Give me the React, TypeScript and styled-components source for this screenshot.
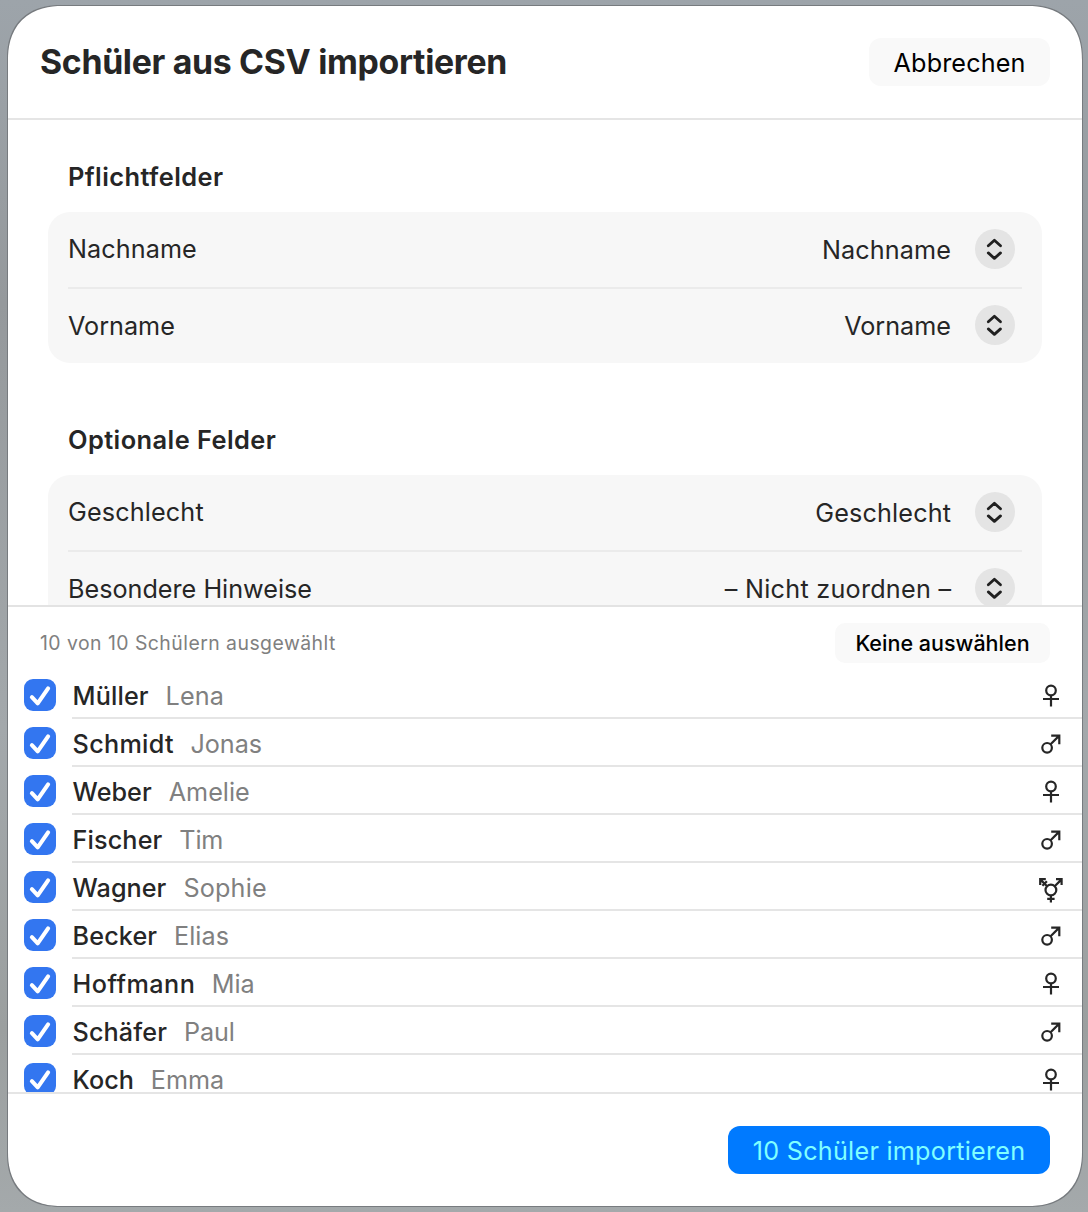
import React, { useState } from 'react';
import styled, { createGlobalStyle, css } from 'styled-components';

const GlobalStyle = createGlobalStyle`
  * { box-sizing: border-box; }
  body { margin: 0; }
`;

const Backdrop = styled.div`
  width: 1088px;
  height: 1212px;
  padding: 6px 6px 6px 8px;
  overflow: hidden;
  background: linear-gradient(180deg, #9da4aa 0%, #95999c 25%, #a3a8ab 60%, #9b9f9f 85%, #a4a9ab 100%);
  font-family: Inter, 'Liberation Sans', sans-serif;
  font-size: 25.2px;
  font-weight: 425;
  color: #262626;
`;

const Sheet = styled.main`
  display: flex;
  flex-direction: column;
  height: 1200px;
  overflow: hidden;
  background: #fff;
  border-radius: 54px;
  corner-shape: superellipse(1.2);
  box-shadow: 0 0 0 1px #777b7f;
`;

const Label = styled.span<{ $track?: number; $drop?: number }>`
  padding-top: ${(p) => (p.$drop ?? 0) * 2}px;
  letter-spacing: ${(p) => p.$track ?? 0}px;
  margin-right: ${(p) => -(p.$track ?? 0)}px;
  white-space: nowrap;
`;

const Header = styled.header`
  display: flex;
  align-items: center;
  justify-content: space-between;
  flex: none;
  height: 114px;
  padding: 0 32px;
  border-bottom: 2px solid #e5e5e5;
`;

const Title = styled.h1`
  margin: 0;
  font-size: 33.8px;
  font-weight: 700;
  line-height: 40px;
  letter-spacing: -0.31px;
`;

const Button = styled.button<{ $kind?: 'small' | 'primary'; $width: number }>`
  display: flex;
  align-items: center;
  justify-content: center;
  width: ${(p) => p.$width}px;
  height: 48px;
  padding: 0;
  border: 0;
  border-radius: 12px;
  background: #f9f9f9;
  color: #000;
  font: inherit;
  ${(p) =>
    p.$kind === 'small' &&
    css`
      height: 40px;
      border-radius: 10px;
      font-size: 21.5px;
      font-weight: 500;
    `}
  ${(p) =>
    p.$kind === 'primary' &&
    css`
      background: #007aff;
      color: #80ffff;
    `}
`;

const Form = styled.section`
  flex: none;
  height: 487px;
  padding: 0 40px;
  overflow: hidden;
  border-bottom: 2px solid #e3e3e3;
`;

const GroupTitle = styled.h2<{ $gap: number }>`
  margin: 0;
  padding: ${(p) => p.$gap}px 20px 20px;
  font-size: 25.4px;
  font-weight: 620;
  line-height: 30px;
  letter-spacing: 0.43px;
`;

const Group = styled.div`
  padding: 0 20px;
  background: #f7f7f7;
  border-radius: 22px;
`;

const Field = styled.div`
  display: flex;
  align-items: center;
  justify-content: space-between;
  height: 74px;
  padding: 0 7px 2px 0;

  &:first-child {
    height: 77px;
    padding: 0 7px 1px 0;
    border-bottom: 2px solid #ebebeb;
  }
`;

const Picker = styled.div`
  display: flex;
  align-items: center;
  gap: 24px;
`;

const Stepper = styled.button`
  display: flex;
  align-items: center;
  justify-content: center;
  width: 40px;
  height: 40px;
  padding: 0;
  border: 0;
  border-radius: 50%;
  background: #e4e4e4;
  color: #202020;
`;

const Toolbar = styled.div`
  display: flex;
  align-items: center;
  justify-content: space-between;
  flex: none;
  height: 64px;
  padding: 8px 32px 0;
`;

const Count = styled.div`
  color: #808080;
  font-size: 19.4px;
`;

const List = styled.ul`
  flex: none;
  height: 423px;
  margin: 0;
  padding: 0 0 0 16px;
  overflow: hidden;
  list-style: none;
  border-bottom: 2px solid #e5e5e5;
`;

const Student = styled.li`
  display: flex;
  align-items: stretch;
  gap: 16px;
  height: 48px;
`;

const CheckCell = styled.button`
  display: flex;
  align-items: center;
  padding: 0;
  border: 0;
  background: none;
`;

const StudentBody = styled.div`
  display: flex;
  align-items: center;
  flex: 1;
  padding: 3px 18px 0 0.6px;
  border-bottom: 2px solid #e5e5e5;
`;

const LastName = styled(Label)`
  font-weight: 540;
`;

const FirstName = styled(Label)`
  flex: 1;
  padding-left: 17px;
  color: #808080;
`;

const Footer = styled.footer`
  display: flex;
  align-items: center;
  justify-content: flex-end;
  flex: 1;
  padding: 0 32px;
`;

const Chevrons = () => (
  <svg width="40" height="40" viewBox="0 0 40 40" fill="none" stroke="currentColor" strokeWidth="2.8" strokeLinecap="round" strokeLinejoin="round">
    <path d="M13.3 16.8 19.4 11.3 25.5 16.8M13.3 23.9 19.4 29.4 25.5 23.9" />
  </svg>
);

const Checkbox = ({ checked }: { checked: boolean }) => (
  <svg width="32" height="32" viewBox="0 0 32 32" fill="none">
    <rect width="32" height="32" rx="9" fill={checked ? '#3376f0' : '#e4e4e4'} />
    {checked && <path d="M7.9 18.2 13.7 24.3 24.1 9.4" stroke="#fff" strokeWidth="4.1" strokeLinecap="round" strokeLinejoin="round" />}
  </svg>
);

type Gender = 'female' | 'male' | 'diverse';

const shapes: Record<Gender, React.ReactNode> = {
  female: (
    <>
      <circle cx="13" cy="10.5" r="4.8" />
      <path d="M13 15.3V26.4M5 19H21" />
    </>
  ),
  male: (
    <>
      <circle cx="9.1" cy="19.8" r="4.8" />
      <path d="M12.6 16.3 21 7.9M13.2 7.6H21.3V16.2" />
    </>
  ),
  diverse: (
    <>
      <circle cx="12.9" cy="18" r="5.4" />
      <path d="M12.9 23.4V30.6M9.2 26.8H16.6M16.7 14.2 23.3 7.6M18 7.2H23.6V13M9.1 14.2 2.5 7.6M7.8 7.2H2.2V13M4.4 13.8 8.9 9.3" />
    </>
  ),
};

const GenderIcon = ({ gender }: { gender: Gender }) => (
  <svg width="26" height="32" viewBox="0 0 26 32" fill="none" stroke="#262626" strokeWidth="2.2">
    {shapes[gender]}
  </svg>
);

interface FieldData {
  label: string;
  value: string;
  track: number;
  valueTrack: number;
  drop: number;
}

const required: FieldData[] = [
  { label: 'Nachname', value: 'Nachname', track: 0.08, valueTrack: 0.12, drop: 0 },
  { label: 'Vorname', value: 'Vorname', track: 0, valueTrack: 0, drop: 1 },
];

const optional: FieldData[] = [
  { label: 'Geschlecht', value: 'Geschlecht', track: 0.14, valueTrack: 0.16, drop: 0 },
  { label: 'Besondere Hinweise', value: '– Nicht zuordnen –', track: 0, valueTrack: 0.25, drop: 1 },
];

const students: [string, string, Gender, number, number][] = [
  ['Müller', 'Lena', 'female', 0.12, 0.1],
  ['Schmidt', 'Jonas', 'male', 0.3, -0.1],
  ['Weber', 'Amelie', 'female', 0.05, 0],
  ['Fischer', 'Tim', 'male', 0.12, -0.15],
  ['Wagner', 'Sophie', 'diverse', 0.05, 0.18],
  ['Becker', 'Elias', 'male', 0.1, 0.05],
  ['Hoffmann', 'Mia', 'female', 0.45, -0.1],
  ['Schäfer', 'Paul', 'male', 0.1, -0.05],
  ['Koch', 'Emma', 'female', 0, 0],
];

const FieldGroup = ({ title, gap, fields }: { title: string; gap: number; fields: FieldData[] }) => (
  <>
    <GroupTitle $gap={gap}>{title}</GroupTitle>
    <Group>
      {fields.map((f) => (
        <Field key={f.label}>
          <Label $track={f.track} $drop={f.drop}>{f.label}</Label>
          <Picker>
            <Label $track={f.valueTrack} $drop={1}>{f.value}</Label>
            <Stepper aria-label={f.label}>
              <Chevrons />
            </Stepper>
          </Picker>
        </Field>
      ))}
    </Group>
  </>
);

export default function App() {
  const [off, setOff] = useState<string[]>([]);
  const toggle = (n: string) => setOff(off.includes(n) ? off.filter((x) => x !== n) : [...off, n]);
  return (
    <Backdrop>
      <GlobalStyle />
      <Sheet>
        <Header>
          <Title>Schüler aus CSV importieren</Title>
          <Button $width={181}>
            <Label $track={0.12} $drop={1}>Abbrechen</Label>
          </Button>
        </Header>
        <Form>
          <FieldGroup title="Pflichtfelder" gap={42} fields={required} />
          <FieldGroup title="Optionale Felder" gap={62} fields={optional} />
        </Form>
        <Toolbar>
          <Count>
            <Label $track={0.47}>10 von 10 Schülern ausgewählt</Label>
          </Count>
          <Button $kind="small" $width={215}>
            <Label $track={0.02}>Keine auswählen</Label>
          </Button>
        </Toolbar>
        <List>
          {students.map(([last, first, gender, a, b]) => (
            <Student key={last}>
              <CheckCell aria-label={last} onClick={() => toggle(last)}>
                <Checkbox checked={!off.includes(last)} />
              </CheckCell>
              <StudentBody>
                <LastName $track={a}>{last}</LastName>
                <FirstName $track={b}>{first}</FirstName>
                <GenderIcon gender={gender} />
              </StudentBody>
            </Student>
          ))}
        </List>
        <Footer>
          <Button $kind="primary" $width={322}>
            <Label $track={0.25} $drop={1}>10 Schüler importieren</Label>
          </Button>
        </Footer>
      </Sheet>
    </Backdrop>
  );
}
